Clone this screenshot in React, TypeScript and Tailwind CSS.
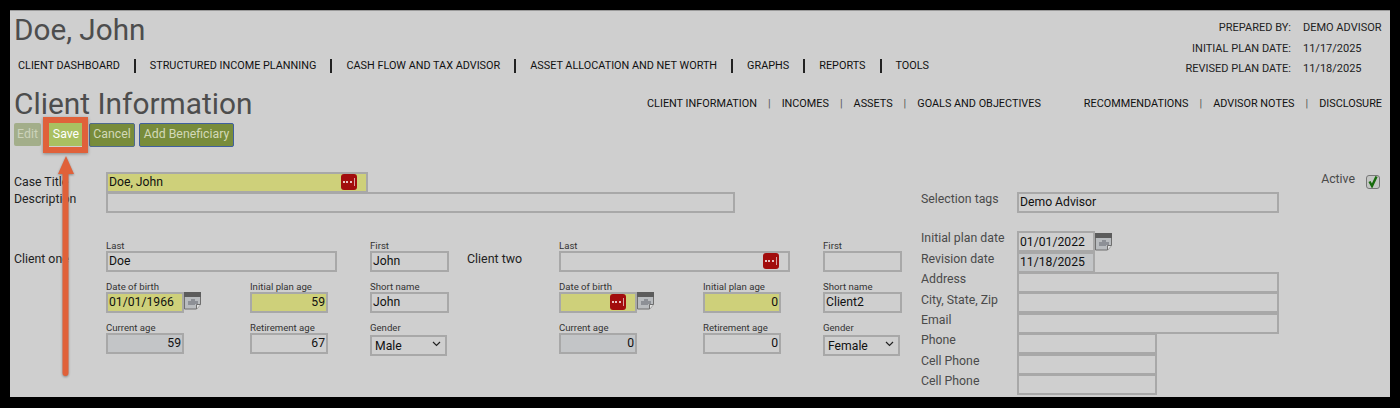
import type { ReactNode } from 'react'

const topNav = ['CLIENT DASHBOARD', 'STRUCTURED INCOME PLANNING', 'CASH FLOW AND TAX ADVISOR', 'ASSET ALLOCATION AND NET WORTH', 'GRAPHS', 'REPORTS', 'TOOLS']

const planDates = [
  ['PREPARED BY:', 'DEMO ADVISOR'],
  ['INITIAL PLAN DATE:', '11/17/2025'],
  ['REVISED PLAN DATE:', '11/18/2025'],
]

function DotsIcon() {
  return (
    <span className="flex h-[16px] w-[16px] items-center justify-center gap-[1.5px] rounded-[3px] bg-[#a20d0d]">
      <span className="h-[2px] w-[2px] rounded-full bg-white" />
      <span className="h-[2px] w-[2px] rounded-full bg-white" />
      <span className="h-[2px] w-[2px] rounded-full bg-white" />
      <span className="ml-[1px] h-[8px] w-[1px] bg-[#d9a0a0]" />
    </span>
  )
}

function CalendarIcon() {
  return (
    <svg width="17" height="18" viewBox="0 0 17 18" className="shrink-0">
      <path d="M0.5 0.5h16v12l-4 4.5h-12z" fill="#b9bcbf" stroke="#6f6f6f" />
      <rect x="0" y="0" width="17" height="5" fill="#5c5c5c" />
      <path d="M4 13v-4h3v-2h4v2h3v3h-3v1z" fill="#8d9096" />
      <path d="M12.5 17v-4.5h4" fill="#e4e4e4" stroke="#6f6f6f" />
    </svg>
  )
}

function Field({ value = '', tone = 'plain', right, width, dots }: {
  value?: string
  tone?: 'plain' | 'yellow' | 'gray'
  right?: boolean
  width: string
  dots?: boolean
}) {
  const bg = tone === 'yellow' ? 'bg-[#ced07a]' : tone === 'gray' ? 'bg-[#c3c5c7]' : 'bg-[#cfcfcf]'
  return (
    <div className={`flex h-[21px] shrink-0 items-center border-2 border-[#a8a8a8] px-[1px] text-[12.2px] text-[#111] ${bg} ${width} ${right ? 'justify-end' : 'justify-between'}`}>
      <span>{value}</span>
      {dots && <span className="mr-[8px]"><DotsIcon /></span>}
    </div>
  )
}

function Labeled({ label, children }: { label: string; children: ReactNode }) {
  return (
    <div className="flex flex-col">
      <div className="h-[14px] text-[9.6px] leading-[17px] text-[#333]">{label}</div>
      {children}
    </div>
  )
}

function ClientGrid({ last, first, dob, dobDots, planAge, shortName, age, retireAge, gender, lastDots }: {
  last: string
  first: string
  dob: string
  dobDots?: boolean
  planAge: string
  shortName: string
  age: string
  retireAge: string
  gender: string
  lastDots?: boolean
}) {
  return (
    <div className="grid grid-cols-[144px_120px_78px] gap-y-[6px]">
      <div className="col-span-2">
        <Labeled label="Last"><Field value={last} width="w-[231px]" dots={lastDots} /></Labeled>
      </div>
      <Labeled label="First"><Field value={first} width="w-[79px]" /></Labeled>
      <Labeled label="Date of birth">
        <div className="flex items-start">
          <Field value={dob} tone="yellow" width="w-[78px]" dots={dobDots} />
          <CalendarIcon />
        </div>
      </Labeled>
      <Labeled label="Initial plan age"><Field value={planAge} tone="yellow" right width="w-[78px]" /></Labeled>
      <Labeled label="Short name"><Field value={shortName} width="w-[79px]" /></Labeled>
      <Labeled label="Current age"><Field value={age} tone="gray" right width="w-[78px]" /></Labeled>
      <Labeled label="Retirement age"><Field value={retireAge} right width="w-[78px]" /></Labeled>
      <Labeled label="Gender">
        <div className="relative h-[21px] w-[77px]">
          <select defaultValue={gender} className="h-full w-full appearance-none rounded-none border-2 border-[#a8a8a8] bg-[#cfcfcf] pl-[3px] text-[12.2px] text-[#111]">
            <option>Male</option>
            <option>Female</option>
          </select>
          <svg className="pointer-events-none absolute right-[6px] top-[8px]" width="9" height="6" viewBox="0 0 9 6">
            <path d="M1 1l3.5 3.5L8 1" fill="none" stroke="#222" strokeWidth="1.2" />
          </svg>
        </div>
      </Labeled>
    </div>
  )
}

function ContactRow({ label, children }: { label: string; children: ReactNode }) {
  return (
    <div className="flex h-[20.4px] items-center">
      <div className="mb-[6px] w-[96px] text-[12.3px] text-[#4a4a4a]">{label}</div>
      {children}
    </div>
  )
}

export default function App() {
  return (
    <div className="h-[408px] w-[1400px] bg-black pb-[11px] pl-[10px] pr-[10px] pt-[10px] font-['Roboto',sans-serif]">
      <div className="relative h-full overflow-hidden border-t border-[#9a9a9a] bg-[#cfcfcf] pl-[4px]">
        {/* header */}
        <div className="flex items-start justify-between">
          <div>
            <h1 className="h-[38px] text-[29.7px] leading-[38px] text-[#4d4d4d]">Doe, John</h1>
            <nav className="mt-[9px] flex items-center pl-[4px] text-[10.85px] text-[#111]">
              {topNav.map((item, i) => (
                <div key={item} className="flex items-center">
                  {i > 0 && <span className="mx-[14px] h-[14px] w-[2px] bg-[#222]" />}
                  <span>{item}</span>
                </div>
              ))}
            </nav>
          </div>
          <div className="mr-[29px] mt-[10px] grid grid-cols-[auto_58px] gap-x-[12px] gap-y-[7px] text-[11px] leading-[13.5px] text-[#222]">
            {planDates.map(([k, v]) => (
              <div key={k} className="contents">
                <div className="text-right">{k}</div>
                <div className="whitespace-nowrap">{v}</div>
              </div>
            ))}
          </div>
        </div>

        {/* page title and section links */}
        <div className="mt-[9px] flex items-start justify-between pr-[8px]">
          <h2 className="h-[38px] text-[29.85px] leading-[38px] text-[#4d4d4d]">Client Information</h2>
          <div className="mt-[11px] flex text-[10.85px] text-[#111]">
            <span>CLIENT INFORMATION</span>
            <span className="mx-[11px] text-[#555]">|</span>
            <span>INCOMES</span>
            <span className="mx-[11px] text-[#555]">|</span>
            <span>ASSETS</span>
            <span className="mx-[11px] text-[#555]">|</span>
            <span>GOALS AND OBJECTIVES</span>
            <span className="w-[43px]" />
            <span>RECOMMENDATIONS</span>
            <span className="mx-[11px] text-[#555]">|</span>
            <span>ADVISOR NOTES</span>
            <span className="mx-[11px] text-[#555]">|</span>
            <span>DISCLOSURE</span>
          </div>
        </div>

        {/* buttons */}
        <div className="mt-0 flex gap-[2px] text-[12.3px]">
          <button className="h-[23px] w-[27px] rounded-[2px] bg-[#a3ae8a] text-[#ccd3bb]">Edit</button>
          <button className="ml-[6px] h-[23px] w-[34px] bg-[#a9c061] text-white">Save</button>
          <button className="ml-[4px] h-[24px] w-[46px] rounded-[2px] border border-[#4f6a8f] bg-[#788c3b] text-[#d3d9b8]">Cancel</button>
          <button className="ml-[2px] h-[24px] w-[95px] rounded-[2px] border border-[#3f5f9f] bg-[#788c3b] text-[#d3d9b8]">Add Beneficiary</button>
        </div>

        {/* form body */}
        <div className="mt-[25px] flex">
          <div className="w-[907px] shrink-0">
            <div className="flex">
              <div className="w-[92px] pt-[1px] text-[12.3px] leading-[18px] text-[#222]">Case Title</div>
              <Field value="Doe, John" tone="yellow" width="w-[262px]" dots />
            </div>
            <div className="mt-[-1px] flex">
              <div className="w-[92px] text-[12.3px] leading-[15px] text-[#222]">Description</div>
              <Field width="w-[629px]" />
            </div>
            <div className="mt-[24px] flex">
              <div className="w-[92px] pt-[13px] text-[12.3px] leading-[18px] text-[#222]">Client one</div>
              <ClientGrid last="Doe" first="John" dob="01/01/1966" planAge="59" shortName="John" age="59" retireAge="67" gender="Male" />
              <div className="w-[111px] pl-[19px] pt-[13px] text-[12.4px] leading-[18px] text-[#222]">Client two</div>
              <ClientGrid last="" lastDots first="" dob="" dobDots planAge="0" shortName="Client2" age="0" retireAge="0" gender="Female" />
            </div>
          </div>

          <div className="flex-1">
            <div className="flex h-[41px] items-start">
              <div className="flex h-[21px] flex-1 items-start pt-[20px]">
                <div className="flex h-[21px] shrink-0 items-center">
                  <div className="mb-[6px] w-[96px] text-[12.3px] leading-[15px] text-[#4a4a4a]">Selection tags</div>
                  <Field value="Demo Advisor" width="w-[262px]" />
                </div>
              </div>
              <div className="mr-[10px] flex items-start gap-[11px]">
                <span className="text-[12.3px] leading-[14px] text-[#4a4a4a]">Active</span>
                <span className="mt-[3px] flex h-[14px] w-[14px] items-center justify-center rounded-[3px] border border-[#777] bg-[#c4c6c4]">
                  <svg width="12" height="13" viewBox="0 0 12 13">
                    <path d="M2.5 6.5l2.5 4.5L9.5 1.5" fill="none" stroke="#176b0c" strokeWidth="2.4" />
                  </svg>
                </span>
              </div>
            </div>
            <div className="pt-[19px]">
              <ContactRow label="Initial plan date">
                <Field value="01/01/2022" width="w-[78px]" />
                <CalendarIcon />
              </ContactRow>
              <ContactRow label="Revision date"><Field value="11/18/2025" tone="gray" width="w-[78px]" /></ContactRow>
              <ContactRow label="Address"><Field width="w-[262px]" /></ContactRow>
              <ContactRow label="City, State, Zip"><Field width="w-[262px]" /></ContactRow>
              <ContactRow label="Email"><Field width="w-[262px]" /></ContactRow>
              <ContactRow label="Phone"><Field width="w-[140px]" /></ContactRow>
              <ContactRow label="Cell Phone"><Field width="w-[140px]" /></ContactRow>
              <ContactRow label="Cell Phone"><Field width="w-[140px]" /></ContactRow>
            </div>
          </div>
        </div>

        {/* callout over the Save button */}
        <div className="absolute left-[33px] top-[106px] h-[36px] w-[45px] border-[6px] border-[#e0613a] shadow-[0_1px_3px_rgba(0,0,0,0.35)]" />
        <svg className="absolute left-[46px] top-[144px] drop-shadow-[0_1px_1px_rgba(0,0,0,0.35)]" width="19" height="224" viewBox="0 0 19 224">
          <path d="M10 1L18 19H12.5V218a3 3 0 0 1-6 0V19H2z" fill="#e0613a" />
        </svg>
      </div>
    </div>
  )
}
